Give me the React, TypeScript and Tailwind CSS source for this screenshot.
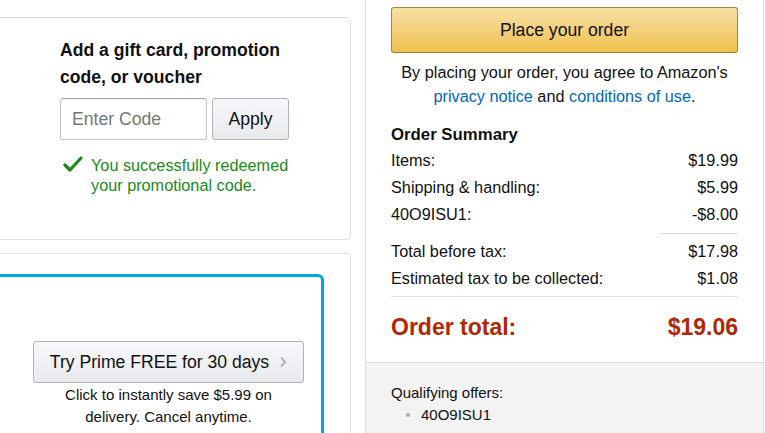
import React from "react";

const rows = [
    { label: "Items:", value: "$19.99" },
    { label: "Shipping & handling:", value: "$5.99" },
    { label: "40O9ISU1:", value: "-$8.00" },
];

const taxRows = [
    { label: "Total before tax:", value: "$17.98" },
    { label: "Estimated tax to be collected:", value: "$1.08" },
];

function CheckIcon() {
    return (
        <svg width="20" height="17" viewBox="0 0 20 17" className="shrink-0 mt-[1px]">
            <polyline points="2,9 7,14 18,2" fill="none" stroke="#1a8a1a" strokeWidth="3.2" strokeLinecap="round" strokeLinejoin="round" />
        </svg>
    );
}

export default function App() {
    return (
        <div className="flex w-[765px] h-[433px] overflow-hidden bg-white text-[#111] font-['Liberation_Sans',Arial,sans-serif]">
            {/* left column */}
            <div className="w-[351px] shrink-0 flex flex-col pt-[17px] gap-[13px]">
                <div className="-ml-[30px] w-[381px] h-[223px] shrink-0 border border-[#ddd] rounded-[5px] pl-[89px] pt-[19px]">
                    <h2 className="w-[240px] text-[17.6px] leading-[27px] font-bold text-[#111]">
                        Add a gift card, promotion code, or voucher
                    </h2>
                    <div className="flex gap-[5px] mt-[7px]">
                        <input
                            type="text"
                            placeholder="Enter Code"
                            className="w-[147px] h-[42px] px-[11px] border border-[#c4c4c4] border-t-[#a6a6a6] rounded-[3px] text-[17.6px] placeholder:text-[#767676] outline-none shadow-[inset_0_1px_0_rgba(0,0,0,0.05)]"
                        />
                        <button className="w-[77px] h-[42px] border border-[#adb1b8] rounded-[3px] bg-gradient-to-b from-[#f7f8fa] to-[#e7e9ec] text-[17.6px] text-[#111]">
                            Apply
                        </button>
                    </div>
                    <div className="flex gap-[8px] mt-[15px] ml-[3px]">
                        <CheckIcon />
                        <p className="w-[210px] text-[16.25px] leading-[20px] text-[#1a8a1a]">
                            You successfully redeemed your promotional code.
                        </p>
                    </div>
                </div>
                <div className="-ml-[30px] w-[381px] flex-1 border border-b-0 border-[#ddd] rounded-t-[5px] pt-[20px] pr-[26px]">
                    <div className="h-full border-[3px] border-b-0 border-l-0 border-[#00a8e1] rounded-tr-[6px] flex flex-col items-end pt-[64px] pr-[17px]">
                        <div className="w-[271px] flex flex-col items-center">
                            <button className="w-[271px] h-[42px] border border-[#adb1b8] rounded-[3px] bg-gradient-to-b from-[#f7f8fa] to-[#e7e9ec] flex items-center justify-center gap-[10px] text-[17.6px] text-[#111]">
                                <span>Try Prime FREE for 30 days</span>
                                <svg width="8" height="12" viewBox="0 0 8 12">
                                    <polyline points="2,1.5 6,6 2,10.5" fill="none" stroke="#aaa" strokeWidth="1.8" />
                                </svg>
                            </button>
                            <p className="mt-[1px] text-[15px] leading-[22px] text-center text-[#111]">
                                Click to instantly save $5.99 on
                                <br />
                                delivery. Cancel anytime.
                            </p>
                        </div>
                    </div>
                </div>
            </div>

            {/* right column */}
            <div className="ml-[14px] w-[399px] shrink-0 border-x border-[#ddd] flex flex-col">
                <div className="px-[25px] pt-[7px]">
                    <button className="w-full h-[46px] rounded-[3px] border border-[#a88734] border-b-[#9c7e31] bg-gradient-to-b from-[#f7dfa5] to-[#f0c14b] text-[17.6px] text-[#111]">
                        Place your order
                    </button>
                    <p className="mt-[7px] text-[16.25px] leading-[24px] text-center text-[#111]">
                        By placing your order, you agree to Amazon's
                        <br />
                        <a href="#" className="text-[#0066c0]">privacy notice</a> and{" "}
                        <a href="#" className="text-[#0066c0]">conditions of use</a>.
                    </p>

                    <h3 className="mt-[15px] text-[16.8px] leading-[24px] font-bold">Order Summary</h3>
                    {rows.map((r) => (
                        <div key={r.label} className="flex justify-between h-[27px] leading-[27px] text-[16.25px]">
                            <span>{r.label}</span>
                            <span>{r.value}</span>
                        </div>
                    ))}
                    <div className="flex justify-end mt-[5px] mb-[4px]">
                        <div className="w-[79px] border-t border-[#ddd]" />
                    </div>
                    {taxRows.map((r) => (
                        <div key={r.label} className="flex justify-between h-[27px] leading-[27px] text-[16.25px]">
                            <span>{r.label}</span>
                            <span>{r.value}</span>
                        </div>
                    ))}
                    <div className="border-t border-[#ddd] mt-[4px]" />
                    <div className="flex justify-between mt-[15px] mb-[20px] h-[30px] leading-[30px] text-[23px] font-bold text-[#b12704]">
                        <span>Order total:</span>
                        <span>$19.06</span>
                    </div>
                </div>
                <div className="flex-1 bg-[#f3f3f3] border-t border-[#ddd] px-[25px] pt-[19px] text-[15px] leading-[22px] text-[#111]">
                    <p>Qualifying offers:</p>
                    <ul className="flex items-center gap-[11px] pl-[15px]">
                        <span className="w-[4px] h-[4px] rounded-full bg-[#aaa]" />
                        <li>40O9ISU1</li>
                    </ul>
                </div>
            </div>
        </div>
    );
}
